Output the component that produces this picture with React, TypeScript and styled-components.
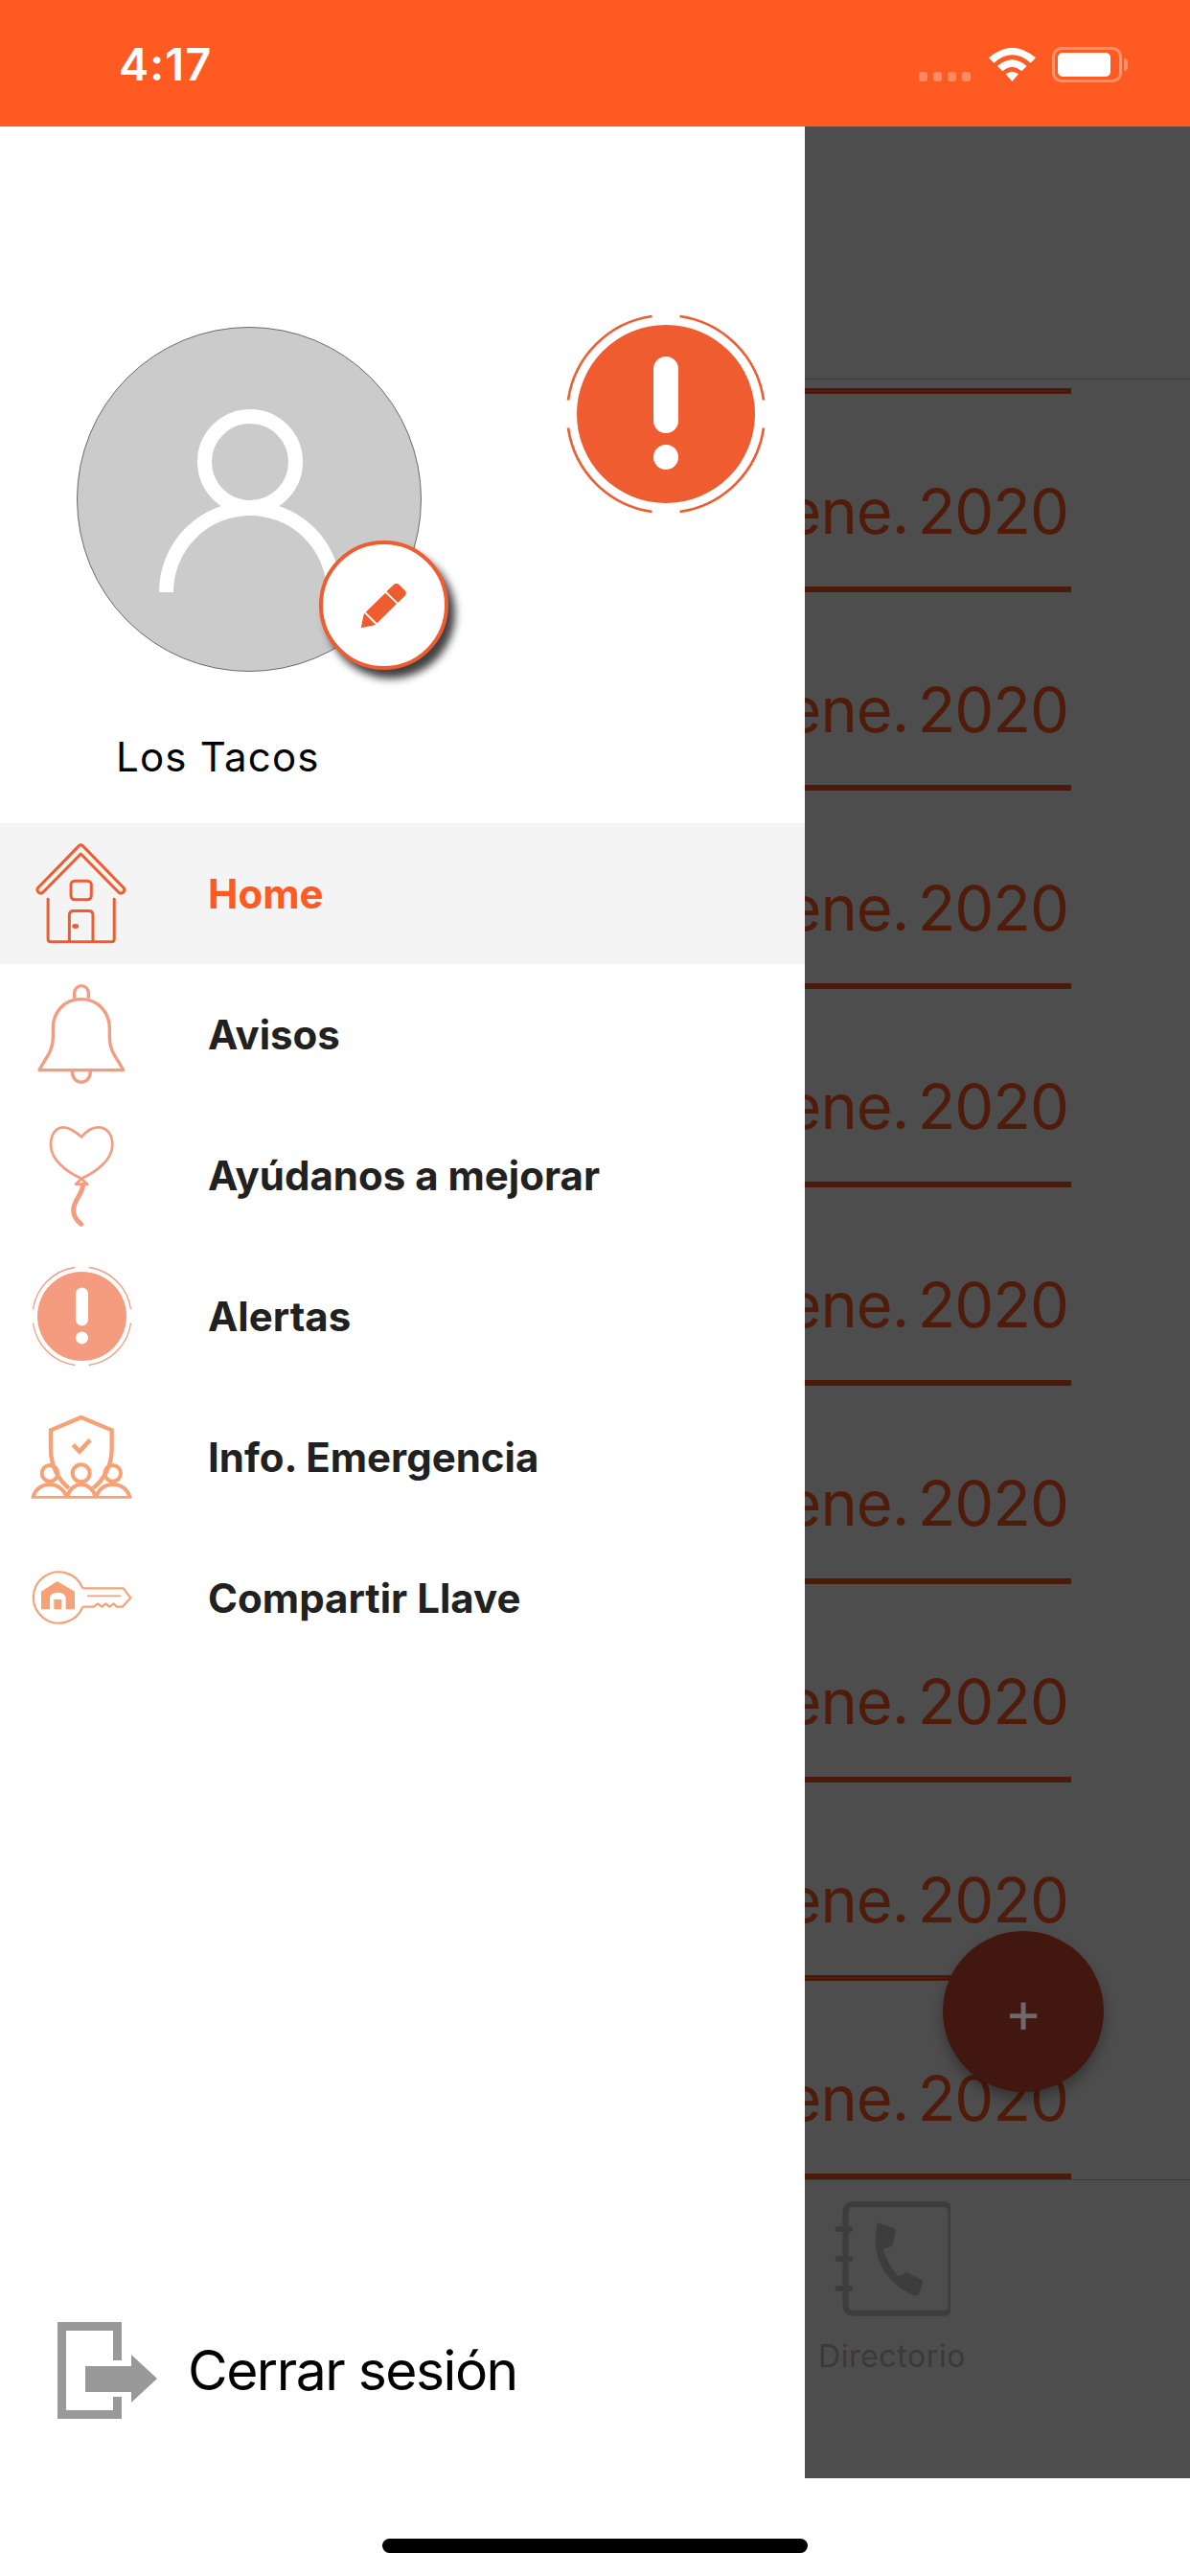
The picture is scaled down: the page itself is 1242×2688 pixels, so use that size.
import React from 'react';
import styled, { createGlobalStyle } from 'styled-components';

const ORANGE = '#ff5a22';
const BRAND = '#ee5c2f';
const SANS = 'Inter, "Liberation Sans", sans-serif';

const GlobalStyle = createGlobalStyle`
  html, body {
    margin: 0;
    padding: 0;
    background: #fff;
  }
  * {
    box-sizing: border-box;
  }
`;

const Page = styled.div`
  width: 1242px;
  height: 2688px;
  display: flex;
  flex-direction: column;
  overflow: hidden;
  font-family: ${SANS};
  background: #fff;
`;

const StatusBar = styled.div`
  height: 132px;
  flex: none;
  background: ${ORANGE};
  display: flex;
  align-items: flex-start;
  justify-content: space-between;
  padding: 49px 65px 0 124px;
`;

const Clock = styled.span`
  color: #fff;
  font-size: 47px;
  line-height: 36px;
  font-weight: 600;
  letter-spacing: 1px;
`;

const StatusIcons = styled.div`
  display: flex;
  align-items: flex-end;
`;

const SignalDots = styled.div`
  display: flex;
  gap: 5.5px;
  margin: 0 19px 1px 0;
`;

const SignalDot = styled.i`
  display: block;
  width: 9.5px;
  height: 10px;
  border-radius: 3px;
  background: rgba(255, 255, 255, 0.3);
`;

const WifiGlyph = styled.svg`
  margin-bottom: 1px;
`;

const BatteryBody = styled.div`
  width: 73px;
  height: 37px;
  margin-left: 17px;
  border: 3px solid rgba(255, 255, 255, 0.35);
  border-radius: 10px;
  padding: 3px;
  display: flex;
`;

const BatteryFill = styled.div`
  width: 55px;
  background: #fff;
  border-radius: 5px;
`;

const BatteryCap = styled.div`
  width: 4px;
  height: 13px;
  margin: 0 0 12px 2px;
  background: rgba(255, 255, 255, 0.35);
  border-radius: 0 4px 4px 0;
`;

const Main = styled.div`
  height: 2454px;
  flex: none;
  display: flex;
`;

const Drawer = styled.aside`
  width: 840px;
  flex: none;
  display: flex;
  flex-direction: column;
  background: #fff;
`;

const ProfileRow = styled.div`
  display: flex;
  align-items: flex-start;
  padding: 195px 0 0 80px;
`;

const Avatar = styled.div`
  position: relative;
  width: 360px;
  height: 360px;
  margin-top: 14px;
  flex: none;
  border-radius: 50%;
  background: #cbcbcb;
  border: 1px solid #6b6b6b;
`;

const EditButton = styled.div`
  position: absolute;
  left: 252px;
  top: 222px;
  width: 135px;
  height: 135px;
  border-radius: 50%;
  background: #fff;
  border: 4px solid ${BRAND};
  display: flex;
  align-items: center;
  justify-content: center;
  box-shadow: 7px 9px 9px rgba(0, 0, 0, 0.75);
`;

const AlertBadge = styled.div`
  margin-left: 150px;
  display: flex;
  color: ${BRAND};
`;

const ProfileName = styled.div`
  padding: 64px 0 0 121px;
  margin-bottom: 44px;
  font-size: 42px;
  line-height: 50px;
  letter-spacing: 1.2px;
  color: #000;
`;

const MenuList = styled.nav`
  display: flex;
  flex-direction: column;
`;

const MenuRow = styled.div<{ $active?: boolean }>`
  height: 147px;
  display: grid;
  grid-template-columns: 170px 1fr;
  column-gap: 47px;
  align-items: center;
  background: ${p => (p.$active ? '#f4f4f4' : 'transparent')};
`;

const IconSlot = styled.div<{ $tone: string }>`
  display: flex;
  justify-content: center;
  color: ${p => p.$tone};
`;

const MenuLabel = styled.span<{ $active?: boolean }>`
  font-size: 42px;
  font-weight: 700;
  color: ${p => (p.$active ? ORANGE : '#212121')};
`;

const LogoutRow = styled.div`
  margin-top: auto;
  display: flex;
  align-items: center;
  gap: 32px;
  padding: 0 0 62px 60px;
`;

const LogoutLabel = styled.span`
  font-size: 57px;
  line-height: 70px;
  letter-spacing: -1.5px;
  color: #000;
`;

const DimmedScreen = styled.div`
  position: relative;
  flex: 1;
  min-width: 0;
  overflow: hidden;
  background: #4d4d4d;
  display: flex;
  flex-direction: column;
`;

const DimmedHeader = styled.div`
  height: 264px;
  flex: none;
  border-bottom: 1px solid #3a3a3a;
`;

const DateList = styled.div`
  width: 278px;
  padding-top: 9px;
`;

const TopRule = styled.div`
  height: 6px;
  background: #4c1a0a;
`;

const DateRow = styled.div`
  height: 207px;
  border-bottom: 6px solid #4c1a0a;
  display: flex;
  justify-content: flex-end;
  overflow: hidden;
  padding: 84px 3px 0 0;
`;

const DateText = styled.span`
  flex: none;
  font-size: 65px;
  line-height: 78px;
  letter-spacing: -1px;
  word-spacing: -8px;
  white-space: nowrap;
  color: #4f1c0b;
`;

const TabBar = styled.div`
  flex: 1;
  border-top: 1px solid #3a3a3a;
  padding: 22px 0 0 15px;
`;

const TabItem = styled.div`
  width: 152px;
  display: flex;
  flex-direction: column;
  align-items: center;
  color: #3d3d3d;
`;

const TabLabel = styled.span`
  margin-top: 22px;
  font-size: 32px;
  line-height: 40px;
  letter-spacing: 0.6px;
  color: #3a3a3a;
`;

const Fab = styled.div`
  position: absolute;
  right: 90px;
  bottom: 403px;
  width: 168px;
  height: 168px;
  border-radius: 50%;
  background: #42170f;
  box-shadow: 0 8px 14px rgba(0, 0, 0, 0.3);
  display: flex;
  align-items: center;
  justify-content: center;
  font-size: 60px;
  line-height: 60px;
  color: #6e6a69;
`;

const HomeBar = styled.div`
  flex: 1;
  background: #fff;
  display: flex;
  justify-content: center;
  padding-top: 63px;
`;

const HomeIndicator = styled.div`
  width: 444px;
  height: 15px;
  border-radius: 8px;
  background: #000;
`;

const WifiIcon = () => (
  <WifiGlyph width="49" height="36" viewBox="273 42 147 108" fill="#fff">
    <path d="M273 76Q346 12 420 76L404 92Q346 42 289 92Z" />
    <path d="M300 102Q346 62 392 102L376 118Q346 92 316 118Z" />
    <path d="M326 127Q346 112 366 127L346 150Z" />
  </WifiGlyph>
);

const AlertIcon = ({ size }: { size: number }) => (
  <svg width={size} height={size} viewBox="-105 -105 210 210" fill="currentColor">
    <circle r="93" />
    <g fill="none" stroke="currentColor" strokeWidth="2.6">
      <path d="M14.5 -102A103 103 0 0 1 102 -14.5" />
      <path d="M102 14.5A103 103 0 0 1 14.5 102" />
      <path d="M-14.5 102A103 103 0 0 1 -102 14.5" />
      <path d="M-102 -14.5A103 103 0 0 1 -14.5 -102" />
    </g>
    <rect x="-13" y="-60" width="26" height="80" rx="13" fill="#fff" />
    <circle cy="45" r="13" fill="#fff" />
  </svg>
);

const PersonIcon = () => (
  <svg width="360" height="360" viewBox="80 341 360 360" fill="none" stroke="#fff" strokeWidth="15">
    <circle cx="260" cy="481" r="47.5" />
    <path d="M172.5 617A87.5 87.5 0 0 1 347.5 617" />
  </svg>
);

const PencilIcon = () => (
  <svg width="47" height="46" viewBox="0 0 141 138" fill={BRAND} stroke={BRAND} strokeWidth="4" strokeLinejoin="round">
    <path d="M2 136L10 96L42 128Z" />
    <path d="M49.5 121L17 89L75.5 32L108 63Z" />
    <path d="M114.8 57L82 25L105 3Q110 0 115 3L137 25Q140 30 137 35Z" />
  </svg>
);

const HomeIcon = () => (
  <svg width="100" height="108" viewBox="105 88 300 325" fill="none" stroke="currentColor" strokeWidth="9" strokeLinecap="round" strokeLinejoin="round">
    <path d="M247 99Q253 93 259 99L387 230Q393 238 386 245Q378 252 370 243L253 124L136 243Q128 252 120 245Q113 238 119 230Z" />
    <path d="M150 266V392Q150 400 158 400H350Q358 400 358 392V266" />
    <rect x="222" y="209" width="64" height="59" rx="12" />
    <path d="M217 400V316Q217 303 230 303H278Q291 303 291 316V400" />
    <ellipse cx="236" cy="351" rx="6" ry="3" fill="currentColor" />
  </svg>
);

const BellIcon = () => (
  <svg width="94" height="106" viewBox="113 528 282 318" fill="none" stroke="currentColor" strokeWidth="10" strokeLinejoin="round">
    <path d="M232 572V555A22 22 0 0 1 276 555V572" />
    <path d="M253 575C195 575 165 620 165 665V695C165 740 140 760 122 797H385C366 760 342 740 342 695V665C342 620 310 575 253 575Z" />
    <path d="M225 800C225 846 282 846 282 800" />
  </svg>
);

const BalloonIcon = () => (
  <svg width="70" height="106" viewBox="148 68 210 318" fill="none" stroke="currentColor" strokeWidth="8" strokeLinecap="round" strokeLinejoin="round">
    <path d="M253 105C230 85 215 75 197 75C170 75 157 100 157 130C157 175 205 215 253 235C300 215 350 175 350 130C350 100 335 75 305 75C287 75 270 85 253 105Z" />
    <path d="M253 236L235 253H272Z" />
    <path d="M258 255C255 290 228 300 228 335C228 355 240 368 252 378" strokeWidth="15" />
  </svg>
);

const ShieldIcon = () => (
  <svg width="106" height="88" viewBox="95 84 318 264" fill="none" stroke="currentColor" strokeWidth="13">
    <path d="M215 312C180 285 158 240 158 190V130L253 90L349 130V190C349 240 325 285 290 312" />
    <path d="M228 176L248 197L281 161" strokeWidth="14" />
    <circle cx="155" cy="265" r="25" strokeWidth="12" />
    <circle cx="253" cy="265" r="27" strokeWidth="12" />
    <circle cx="352" cy="265" r="25" strokeWidth="12" />
    <path d="M103 340C108 315 130 300 155 300C178 300 200 315 208 340" strokeWidth="12" />
    <path d="M210 340C215 315 235 300 253 300C272 300 292 315 298 340" strokeWidth="12" />
    <path d="M300 340C306 315 328 300 352 300C378 300 400 315 405 340" strokeWidth="12" />
    <path d="M97 340H411" strokeWidth="8" />
  </svg>
);

const KeyIcon = () => (
  <svg width="106" height="57" viewBox="95 567 318 171" fill="none" stroke="currentColor" strokeWidth="6.5" strokeLinejoin="round">
    <path d="M258 622A80 80 0 1 0 258 680" />
    <path d="M258 622H385L408 652L382 680H365L355 670L342 680L330 670L318 680L305 670L292 680H270L258 680" />
    <path d="M272 646H378" strokeWidth="5" />
    <path d="M128 632L178 600L233 632V688H205V655Q205 635 180 635Q155 635 155 655V688H128Z" fill="currentColor" stroke="none" />
    <rect x="168" y="657" width="24" height="31" fill="currentColor" stroke="none" />
  </svg>
);

const LogoutIcon = () => (
  <svg width="104" height="101" viewBox="0 0 104 101" fill="#999">
    <path d="M0 0H67V40H58V9H9V92H58V78H67V101H0Z" />
    <path d="M29 46H77V34L104 59L77 84V73H29Z" />
  </svg>
);

const DirectoryIcon = () => (
  <svg width="121" height="120" viewBox="38 50 362 360" fill="none" stroke="currentColor" strokeWidth="18">
    <rect x="72" y="60" width="330" height="340" rx="22" />
    <path d="M48 137H86M48 231H86M48 323H86" strokeLinecap="round" />
    <path
      d="M178 118L225 135Q230 138 228 145L220 185Q218 192 190 200C200 240 225 270 238 285L262 272L310 295Q316 300 312 310L302 340Q298 347 290 345C230 325 165 260 165 170L170 125Q172 116 178 118Z"
      fill="currentColor"
      stroke="none"
    />
  </svg>
);

const menuItems = [
  { label: 'Home', icon: <HomeIcon />, tone: BRAND, active: true },
  { label: 'Avisos', icon: <BellIcon />, tone: '#f49b80' },
  { label: 'Ayúdanos a mejorar', icon: <BalloonIcon />, tone: '#f49b80' },
  { label: 'Alertas', icon: <AlertIcon size={105} />, tone: '#f49b80' },
  { label: 'Info. Emergencia', icon: <ShieldIcon />, tone: '#f7a176' },
  { label: 'Compartir Llave', icon: <KeyIcon />, tone: '#f7a176' },
];

const App: React.FC = () => (
  <Page>
    <GlobalStyle />
    <StatusBar>
      <Clock>4:17</Clock>
      <StatusIcons>
        <SignalDots>
          {[0, 1, 2, 3].map(i => (
            <SignalDot key={i} />
          ))}
        </SignalDots>
        <WifiIcon />
        <BatteryBody>
          <BatteryFill />
        </BatteryBody>
        <BatteryCap />
      </StatusIcons>
    </StatusBar>

    <Main>
      <Drawer>
        <ProfileRow>
          <Avatar>
            <PersonIcon />
            <EditButton>
              <PencilIcon />
            </EditButton>
          </Avatar>
          <AlertBadge>
            <AlertIcon size={210} />
          </AlertBadge>
        </ProfileRow>
        <ProfileName>Los Tacos</ProfileName>

        <MenuList>
          {menuItems.map(item => (
            <MenuRow key={item.label} $active={item.active}>
              <IconSlot $tone={item.tone}>{item.icon}</IconSlot>
              <MenuLabel $active={item.active}>{item.label}</MenuLabel>
            </MenuRow>
          ))}
        </MenuList>

        <LogoutRow>
          <LogoutIcon />
          <LogoutLabel>Cerrar sesión</LogoutLabel>
        </LogoutRow>
      </Drawer>

      <DimmedScreen>
        <DimmedHeader />
        <DateList>
          <TopRule />
          {Array.from({ length: 9 }, (_, i) => (
            <DateRow key={i}>
              <DateText>ene. 2020</DateText>
            </DateRow>
          ))}
        </DateList>
        <TabBar>
          <TabItem>
            <DirectoryIcon />
            <TabLabel>Directorio</TabLabel>
          </TabItem>
        </TabBar>
        <Fab>+</Fab>
      </DimmedScreen>
    </Main>

    <HomeBar>
      <HomeIndicator />
    </HomeBar>
  </Page>
);

export default App;
